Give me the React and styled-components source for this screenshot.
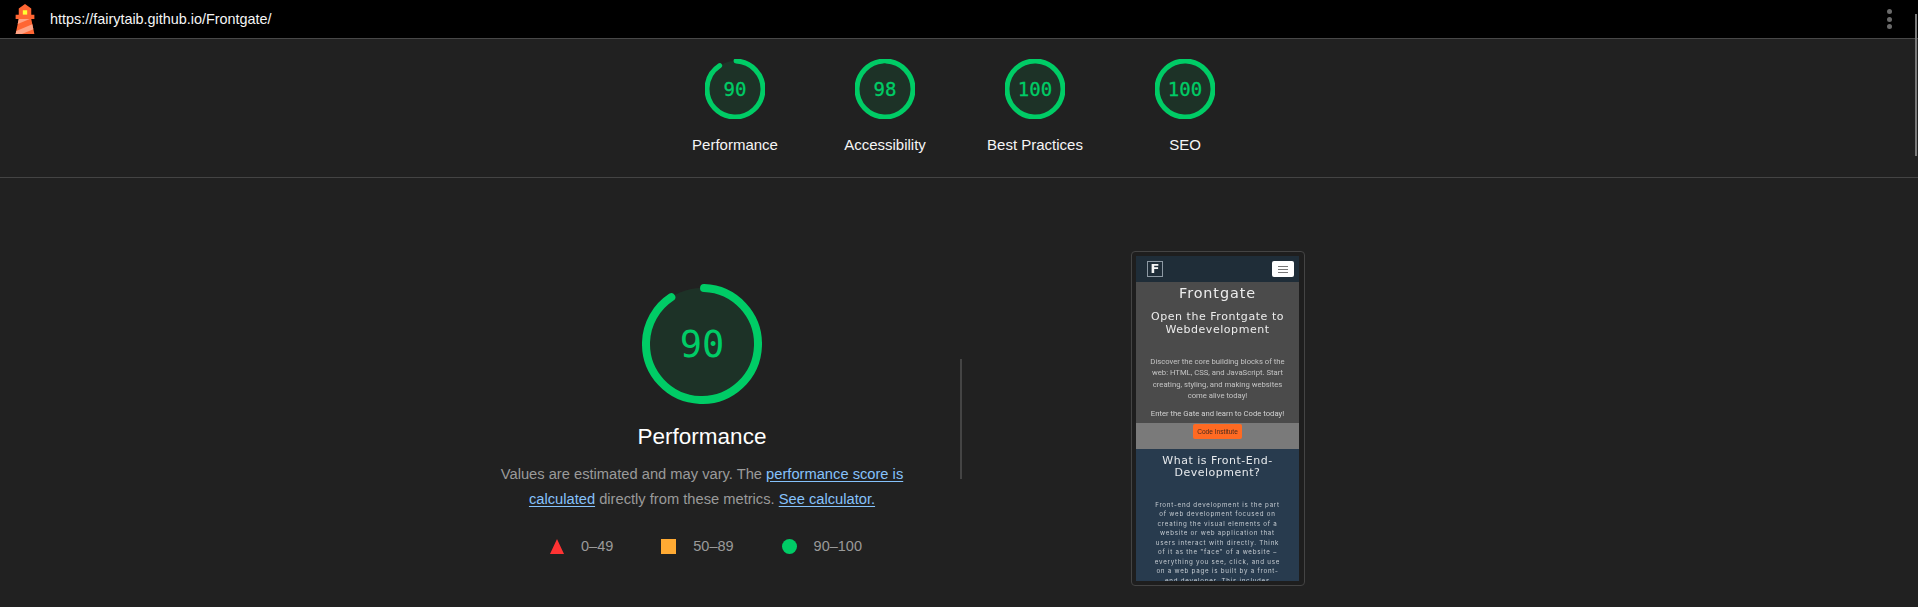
import React from "react";
import styled, { createGlobalStyle } from "styled-components";

const Global = createGlobalStyle`
  html, body { margin: 0; padding: 0; background: #212121; }
  body { font-family: "Liberation Sans", Arial, sans-serif; overflow: hidden; }
  #root { width: 1918px; height: 607px; overflow: hidden; }
`;

const Page = styled.div`
  position: relative;
  width: 1918px;
  height: 607px;
  overflow: hidden;
  background: #212121;
  color: #f5f5f5;
`;
const TopBar = styled.header`
  box-sizing: border-box;
  height: 39px;
  background: #000;
  border-bottom: 1px solid #484848;
  display: flex;
  align-items: center;
  padding: 0 26px 0 10px;
`;
const Url = styled.a`
  margin-left: 10px;
  font-size: 14.4px;
  color: #f5f5f5;
  flex: 1;
  line-height: 38px;
`;
const Dots = styled.div`
  display: flex;
  flex-direction: column;
  gap: 2.5px;
`;
const Dot = styled.span`
  width: 5px;
  height: 5px;
  border-radius: 50%;
  background: #6a6a6a;
`;
const ScoreRow = styled.nav`
  box-sizing: border-box;
  height: 139px;
  border-bottom: 1px solid #444;
  display: flex;
  justify-content: center;
  padding: 20px 0 0 2px;
`;
const ScoreItem = styled.a`
  width: 150px;
  display: flex;
  flex-direction: column;
  align-items: center;
  font-size: 15px;
  color: #f5f5f5;
`;
const ScoreLabel = styled.span`
  margin-top: 16px;
  line-height: 20px;
  white-space: nowrap;
`;
const GaugeBox = styled.div`
  position: relative;
  width: ${(p) => p.$size}px;
  height: ${(p) => p.$size}px;
  flex: none;
`;
const GaugeNum = styled.span`
  position: absolute;
  inset: 0;
  display: flex;
  align-items: center;
  justify-content: center;
  font-family: "DejaVu Sans Mono", monospace;
  font-size: ${(p) => p.$font}px;
  -webkit-text-stroke: ${(p) => p.$stroke}px #00cc66;
  color: #00cc66;
`;
const Main = styled.main`
  display: flex;
  align-items: center;
  padding-top: 73px;
`;
const Summary = styled.section`
  box-sizing: border-box;
  width: 516px;
  margin-left: 444px;
  display: flex;
  flex-direction: column;
  align-items: center;
  margin-top: 5px;
`;
const Title = styled.h1`
  margin: 15px 0 0;
  font-size: 22.5px;
  font-weight: 400;
  line-height: 36px;
  color: #fff;
`;
const Desc = styled.p`
  margin: 7px 0 0;
  width: 420px;
  text-align: center;
  font-size: 14.7px;
  line-height: 25px;
  color: #9a9a9a;
`;
const DescLine = styled.span`
  display: block;
  white-space: nowrap;
`;
const Link = styled.a`
  color: #86c2fb;
  text-decoration: underline;
  text-underline-offset: 2px;
`;
const Legend = styled.div`
  display: flex;
  align-items: center;
  gap: 48px;
  margin-top: 22px;
  margin-left: 8px;
  font-size: 14.5px;
  line-height: 24px;
  color: #9a9a9a;
`;
const LegendItem = styled.span`
  display: flex;
  align-items: center;
  gap: 17px;
`;
const Triangle = styled.i`
  width: 0;
  height: 0;
  border-left: 7.5px solid transparent;
  border-right: 7.5px solid transparent;
  border-bottom: 15px solid #ff3333;
`;
const Square = styled.i`
  width: 15px;
  height: 15px;
  background: #ffaa33;
`;
const Circle = styled.i`
  width: 15px;
  height: 15px;
  border-radius: 50%;
  background: #00cc66;
`;
const Divider = styled.div`
  width: 2px;
  height: 120px;
  background: #444;
  flex: none;
`;
const Frame = styled.figure`
  box-sizing: border-box;
  margin: 0 0 0 169px;
  width: 174px;
  height: 335px;
  padding: 4px 5px 4px 4px;
  border: 1px solid #444;
  border-radius: 4px;
  background: #1e1e1e;
  flex: none;
`;
const Thumb = styled.div`
  height: 325px;
  overflow: hidden;
  filter: blur(0.45px);
  text-align: center;
  display: flex;
  flex-direction: column;
`;
const ThumbNav = styled.div`
  box-sizing: border-box;
  height: 26px;
  flex: none;
  background: #1f2d38;
  display: flex;
  align-items: center;
  justify-content: space-between;
  padding: 0 5px 0 11px;
`;
const ThumbLogo = styled.span`
  box-sizing: border-box;
  width: 16px;
  height: 16px;
  border: 1px solid #8d99a3;
  color: #f4f4f4;
  font: 700 13px/14px "DejaVu Sans", sans-serif;
`;
const Toggler = styled.span`
  box-sizing: border-box;
  width: 22px;
  height: 16px;
  border-radius: 2px;
  background: #fff;
  display: flex;
  flex-direction: column;
  justify-content: center;
  align-items: center;
  gap: 2px;
`;
const TogglerLine = styled.i`
  width: 10px;
  height: 1px;
  background: #777;
`;
const Hero = styled.div`
  height: 141px;
  flex: none;
  background: #4b4b4b;
  color: #e8e8e8;
`;
const Brand = styled.div`
  margin-top: 3px;
  font: 400 14.4px/16px "DejaVu Sans", sans-serif;
  letter-spacing: 0.9px;
  color: #ececec;
`;
const HeroHead = styled.div`
  margin-top: 9px;
  font: 400 11px/13px "DejaVu Sans", sans-serif;
  letter-spacing: 0.55px;
  color: #ececec;
`;
const HeroText = styled.p`
  margin: 20px 0 0;
  padding: 0 12px;
  font: 400 7.7px/11.4px Roboto, sans-serif;
  color: #c4c4c4;
`;
const HeroCta = styled.p`
  margin: 6px 0 0;
  font: 400 7.7px/11px Roboto, sans-serif;
  color: #d2d2d2;
`;
const CtaBand = styled.div`
  height: 26px;
  flex: none;
  background: #7a7a7a;
  display: flex;
  justify-content: center;
  padding-top: 1px;
  box-sizing: border-box;
`;
const CtaButton = styled.span`
  width: 49px;
  height: 15px;
  border-radius: 2px;
  background: #ff6a22;
  color: #4a2a1c;
  font: 400 6.6px/15px "Liberation Sans", sans-serif;
`;
const Explain = styled.div`
  flex: 1;
  background: #283b4e;
  padding-top: 6px;
`;
const ExplainHead = styled.div`
  font: 400 11px/12px "DejaVu Sans", sans-serif;
  letter-spacing: 0.5px;
  color: #e6e9ec;
`;
const ExplainText = styled.p`
  margin: 21px 0 0;
  padding: 0 18px;
  font: 400 6.2px/9.45px Inter, sans-serif;
  letter-spacing: 0.76px;
  color: #c6ccd2;
`;
const Scrollbar = styled.div`
  position: absolute;
  right: 1px;
  top: 14px;
  width: 2px;
  height: 142px;
  background: #7a7a7a;
`;

function Gauge({ size, font, score, width, stroke }) {
  return (
    <GaugeBox $size={size}>
      <svg viewBox="0 0 120 120" width={size} height={size}>
        <circle cx="60" cy="60" r="56" fill="#00cc66" fillOpacity="0.1" stroke="none" />
        <circle
          cx="60"
          cy="60"
          r="56"
          fill="none"
          stroke="#00cc66"
          strokeWidth={width}
          strokeLinecap="round"
          strokeDasharray={`${(score / 100) * 352} 352`}
          transform="rotate(-87.9 60 60)"
        />
      </svg>
      <GaugeNum $font={font} $stroke={stroke}>{score}</GaugeNum>
    </GaugeBox>
  );
}

const scores = [
  ["Performance", 90],
  ["Accessibility", 98],
  ["Best Practices", 100],
  ["SEO", 100],
];

export default function App() {
  return (
    <Page>
      <Global />
      <TopBar>
        <svg width="30" height="30" viewBox="0 0 48 48">
          <path d="m14 7 10-7 10 7v10h5v7h-5l5 24H9l5-24H9v-7h5V7Z" fill="#F63" />
          <path d="M31.561 24H14l-1.689 8.105L31.561 24ZM18.983 48H9l1.022-4.907L35.723 32.27l1.663 7.98L18.983 48Z" fill="#FFA385" />
          <path fill="#FF3" d="M20.5 10h7v7h-7z" />
        </svg>
        <Url>https://fairytaib.github.io/Frontgate/</Url>
        <Dots>
          <Dot />
          <Dot />
          <Dot />
        </Dots>
      </TopBar>
      <ScoreRow>
        {scores.map(([label, score]) => (
          <ScoreItem key={label}>
            <Gauge size={60} font={19} score={score} width={10} stroke={0.3} />
            <ScoreLabel>{label}</ScoreLabel>
          </ScoreItem>
        ))}
      </ScoreRow>
      <Main>
        <Summary>
          <Gauge size={120} font={37} score={90} width={8} stroke={0} />
          <Title>Performance</Title>
          <Desc>
            <DescLine>Values are estimated and may vary. The <Link>performance score is</Link></DescLine>
            <DescLine><Link>calculated</Link> directly from these metrics. <Link>See calculator.</Link></DescLine>
          </Desc>
          <Legend>
            <LegendItem><Triangle />0–49</LegendItem>
            <LegendItem><Square />50–89</LegendItem>
            <LegendItem><Circle />90–100</LegendItem>
          </Legend>
        </Summary>
        <Divider />
        <Frame>
          <Thumb>
            <ThumbNav>
              <ThumbLogo>F</ThumbLogo>
              <Toggler>
                <TogglerLine />
                <TogglerLine />
                <TogglerLine />
              </Toggler>
            </ThumbNav>
            <Hero>
              <Brand>Frontgate</Brand>
              <HeroHead>Open the Frontgate to<br />Webdevelopment</HeroHead>
              <HeroText>Discover the core building blocks of the web: HTML, CSS, and JavaScript. Start creating, styling, and making websites come alive today!</HeroText>
              <HeroCta>Enter the Gate and learn to Code today!</HeroCta>
            </Hero>
            <CtaBand><CtaButton>Code Institute</CtaButton></CtaBand>
            <Explain>
              <ExplainHead>What is Front-End-<br />Development?</ExplainHead>
              <ExplainText>Front-end development is the part of web development focused on creating the visual elements of a website or web application that users interact with directly. Think of it as the "face" of a website – everything you see, click, and use on a web page is built by a front-end developer. This includes</ExplainText>
            </Explain>
          </Thumb>
        </Frame>
      </Main>
      <Scrollbar />
    </Page>
  );
}
